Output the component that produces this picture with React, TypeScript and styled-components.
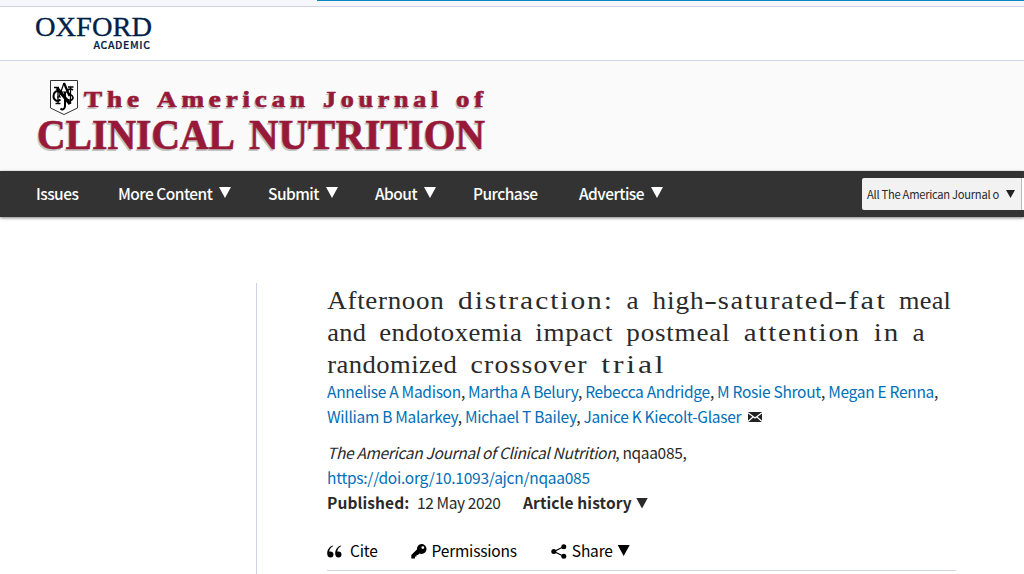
import styled, { createGlobalStyle } from 'styled-components';

const SANS = '"Noto Sans CJK SC", "Noto Sans", sans-serif';

const navItems = [
  { label: 'Issues', width: 42, gap: 40, arrow: false },
  { label: 'More Content', width: 94, gap: 37, arrow: true },
  { label: 'Submit', width: 51, gap: 37, arrow: true },
  { label: 'About', width: 42, gap: 37, arrow: true },
  { label: 'Purchase', width: 66, gap: 40, arrow: false },
  { label: 'Advertise', width: 65, gap: 37, arrow: true },
];

// [text, slack per glyph] - every glyph ends up on a 13px pitch
const titleLines: [string, number][][] = [
  [['Afternoon', 1.13], [' ', 0], ['distraction:', 3.25], [' ', 0], ['a', 1.46], [' ', 0], ['high', 1.44], ['-', 4.34], ['saturated', 2.57], ['-', 4.34], ['fat', 3.86], [' ', 0], ['meal', 0.36]],
  [['and', 0.49], [' ', 0], ['endotoxemia', 0.79], [' ', 0], ['impact', 1.2], [' ', 0], ['postmeal', 1.26], [' ', 0], ['attention', 2.89], [' ', 0], ['in', 2.89], [' ', 0], ['a', 1.46]],
  [['randomized', 0.73], [' ', 0], ['crossover', 1.93], [' ', 0], ['trial', 4.62]],
];

const authorLines = [
  ['Annelise A Madison', 'Martha A Belury', 'Rebecca Andridge', 'M Rosie Shrout', 'Megan E Renna'],
  ['William B Malarkey', 'Michael T Bailey', 'Janice K Kiecolt-Glaser'],
];

// part of the slack goes into wider glyphs, the rest into tracking
const stretch = (slack: number, dash: boolean) => 1 + ((dash ? 1 : 0.4) * slack) / (13 - slack);
const tracking = (slack: number, dash: boolean) => 13 / stretch(slack, dash) - (13 - slack);

const OxfordLogo = () => (
  <svg width='120' height='40' viewBox='34 11 120 40' fill='#002147'>
    <text x='35' y='36' fontFamily='Liberation Serif, serif' fontSize='26.5' textLength='117' lengthAdjust='spacingAndGlyphs' stroke='#002147' strokeWidth='.3'>OXFORD</text>
    <text x='93.5' y='48.500' fontFamily='Noto Sans CJK SC, sans-serif' fontWeight='500' fontSize='10.5' textLength='56.500' lengthAdjust='spacing' stroke='#002147' strokeWidth='.2'>ACADEMIC</text>
  </svg>
);

const JournalWords = () => (
  <>
    <g fontSize='22.5' letterSpacing='4'>
      <text x='84' y='106.500' textLength='60' lengthAdjust='spacingAndGlyphs'>The</text>
      <text x='157' y='106.500' textLength='153' lengthAdjust='spacingAndGlyphs'>American</text>
      <text x='323' y='106.500' textLength='120' lengthAdjust='spacingAndGlyphs'>Journal</text>
      <text x='456' y='106.500' textLength='32' lengthAdjust='spacingAndGlyphs'>of</text>
    </g>
    <g fontSize='42.5'>
      <text x='37' y='149' textLength='198' lengthAdjust='spacingAndGlyphs'>CLINICAL</text>
      <text x='249' y='149' textLength='236' lengthAdjust='spacingAndGlyphs'>NUTRITION</text>
    </g>
  </>
);

const JournalLogo = () => (
  <svg width='460' height='90' viewBox='34 71 460 90' fontFamily='Liberation Serif, serif' fontWeight='700'>
    <path d='M50.5 80.5h27v27.500L64 114.500l-13.500-6.500z' fill='#fff' stroke='#333' strokeWidth='1' />
    <g fill='none' stroke='#000'>
      <path d='M57 88l13 16' strokeWidth='3.200' />
      <path d='M54 87.500h5M58 88v15M55.500 103.500h5M70.500 87v17M68 87h5.500' strokeWidth='1.300' />
      <path d='M59 97l5-14M57 97h4M60 92h8' strokeWidth='1.200' />
      <path d='M64 83l5.500 13' strokeWidth='2.200' />
      <path d='M60 92c-3-2.500-6.500 0-6.500 4s3.500 6.500 7 3.500' strokeWidth='2' />
      <path d='M73 90c-3-2-6-.5-5.500 2s5.500 2.500 5.500 5.500-3.500 3.500-6 1.500' strokeWidth='1.600' />
      <path d='M65 92v14c0 3-2.500 4.500-4.500 2.500' strokeWidth='2' />
    </g>
    <g transform='translate(-1.500 2)' fill='#c4c4c4' aria-hidden='true'>
      <JournalWords />
    </g>
    <g fill='#981837' stroke='#981837' strokeWidth='.6'>
      <JournalWords />
    </g>
  </svg>
);

const MailIcon = () => (
  <svg width='14' height='10' viewBox='0 0 14 10'>
    <path d='M0 0h14v10H0z' fill='#222' />
    <path d='M0 .8l7 5.200 7-5.200M0 9.500l5-4.500M14 9.500L9 5' fill='none' stroke='#fff' strokeWidth='1.200' />
  </svg>
);

const QuoteIcon = () => (
  <svg width='15' height='13' viewBox='0 0 15 13'>
    <path d='M6 .5C2.500 1.500.200 4.500.200 8.500c0 2.500 1.300 4 3.300 4a3 3 0 0 0 3-3c0-1.800-1.200-3-3-3-.6 0-1 .1-1.300.3C2.500 4 4 2 6.300 1zM14 .5c-3.500 1-5.800 4-5.800 8 0 2.500 1.300 4 3.300 4a3 3 0 0 0 3-3c0-1.800-1.200-3-3-3-.6 0-1 .1-1.300.3.3-2.800 1.800-4.800 4.100-5.800z' />
  </svg>
);

const KeyIcon = () => (
  <svg width='16' height='15' viewBox='0 0 16 15'>
    <path fillRule='evenodd' d='M10.500 0a5 5 0 0 1 0 10c-.8 0-1.500-.1-2.100-.4L7 11H5.500v1.500H4V14.500H.3v-3.500l5.600-5.500A5 5 0 0 1 10.500 0zM11.800 2.200a1.400 1.400 0 1 0 0 2.800 1.400 1.400 0 0 0 0-2.800z' />
  </svg>
);

const ShareIcon = () => (
  <svg width='16' height='15' viewBox='0 0 16 15'>
    <path d='M13 2.500L3 7.500l10 5' fill='none' stroke='#000' strokeWidth='1.200' />
    <circle cx='12.800' cy='2.700' r='2.500' />
    <circle cx='2.800' cy='7.500' r='2.500' />
    <circle cx='12.800' cy='12.300' r='2.500' />
  </svg>
);

const App = () => {
  return (
    <>
      <GlobalStyle />
      <TopStrip><ActiveLine /></TopStrip>
      <BrandBar><OxfordLogo /></BrandBar>
      <JournalHeader><JournalLogo /></JournalHeader>
      <NavBar>
        {navItems.map((item) => (
          <NavItem key={item.label} $gap={item.gap}>
            <NavLabel $width={item.width}>{item.label}</NavLabel>
            {item.arrow && <Arrow $color='#fff' $left={7} $up={3} />}
          </NavItem>
        ))}
        <SearchSelect>
          <SelectText>All The American Journal o</SelectText>
          <Arrow $color='#222' $left={7} $size={9} />
        </SearchSelect>
        <SearchInput />
      </NavBar>
      <Content>
        <Sidebar />
        <Article>
          <Title>
            {titleLines.map((line, i) => (
              <TitleLine key={i}>
                {line.map(([text, slack], j) =>
                  text === ' ' ? ' ' : (
                    <Word key={j} $count={text.length} $slack={slack} $dash={text === '-'}>{text}</Word>
                  ),
                )}
              </TitleLine>
            ))}
          </Title>
          <Authors>
            {authorLines.map((line, i) => (
              <AuthorLine key={i}>
                {line.map((name, j) => (
                  <span key={name}>
                    <Link>{name}</Link>
                    {i === 0 || j < line.length - 1 ? ', ' : '  '}
                  </span>
                ))}
                {i === 1 && <MailIcon />}
              </AuthorLine>
            ))}
          </Authors>
          <Citation>
            <TextLine $track={-0.33}><em>The American Journal of Clinical Nutrition</em>, nqaa085,</TextLine>
            <TextLine $track={-0.26}><Link>https://doi.org/10.1093/ajcn/nqaa085</Link></TextLine>
            <HistoryLine>
              <Strong $width={82}>Published:</Strong>
              <PubDate>12 May 2020</PubDate>
              <Strong $width={109}>Article history</Strong>
              <Arrow $color='#2a2a2a' $left={4} $up={-1} />
            </HistoryLine>
          </Citation>
          <Toolbar>
            <Tool $gap={8} $after={33}><QuoteIcon />Cite</Tool>
            <Tool $gap={5} $after={34}><KeyIcon />Permissions</Tool>
            <Tool $gap={5} $after={0}><ShareIcon />Share<Arrow $color='#000' $left={0} $up={-2} /></Tool>
          </Toolbar>
        </Article>
      </Content>
    </>
  );
};

export default App;

const GlobalStyle = createGlobalStyle`
* {
  box-sizing: border-box;
}
body {
  margin: 0;
  height: 574px;
  overflow: hidden;
  background: #fff;
  color: #2a2a2a;
  font-family: ${SANS};
  font-size: 15.5px;
  letter-spacing: -0.25px;
}
svg {
  display: block;
  flex: none;
  overflow: visible;
  letter-spacing: 0;
}
`;

const TopStrip = styled.div`
height: 7px;
background: #f5f7fb;
border-bottom: 1px solid #ced3e5;
`;

const ActiveLine = styled.div`
height: 1px;
margin-left: 317px;
background: #0a86bf;
`;

const BrandBar = styled.div`
height: 54px;
padding: 4px 34px 0;
border-bottom: 1px solid #ced3e5;
`;

const JournalHeader = styled.header`
height: 110px;
padding: 10px 34px 0;
background: #fafafa;
`;

const NavBar = styled.nav`
display: flex;
align-items: center;
height: 46px;
padding-left: 36px;
background: #333;
box-shadow: 0 1px 3px rgba(0, 0, 0, 0.5);
`;

const NavItem = styled.div<{ $gap: number }>`
display: flex;
align-items: center;
flex: none;
margin-right: ${({ $gap }) => $gap}px;
color: #fff;
font-weight: 500;
letter-spacing: -0.52px;
`;

const NavLabel = styled.span<{ $width: number }>`
width: ${({ $width }) => $width}px;
padding-bottom: 2px;
white-space: nowrap;
`;

const Arrow = styled.span<{ $color: string; $left: number; $up?: number; $size?: number }>`
flex: none;
width: ${({ $size = 12 }) => $size}px;
height: ${({ $size = 12 }) => $size - 1}px;
margin-left: ${({ $left }) => $left}px;
margin-bottom: ${({ $up = 0 }) => $up}px;
background: ${({ $color }) => $color};
clip-path: polygon(0 0, 100% 0, 50% 100%);
`;

const SearchSelect = styled.div`
display: flex;
align-items: center;
flex: none;
width: 160px;
height: 32px;
margin-left: auto;
padding-left: 5px;
border-right: 1px solid #bbb;
border-radius: 2px 0 0 2px;
background: #f2f2f2;
color: #2a2a2a;
font-size: 11.2px;
letter-spacing: -0.28px;
`;

const SelectText = styled.span`
width: 132px;
padding-bottom: 1px;
white-space: nowrap;
`;

const SearchInput = styled.div`
flex: none;
width: 2px;
height: 32px;
background: #fff;
`;

const Content = styled.main`
display: flex;
height: 357px;
padding-top: 66px;
`;

const Sidebar = styled.aside`
flex: none;
width: 257px;
border-right: 1px solid #ced3e5;
`;

const Article = styled.article`
width: 629px;
margin-left: 70px;
`;

const Title = styled.h1`
margin: 2px 0 0;
font-family: "Liberation Serif", serif;
font-size: 26px;
font-weight: 400;
line-height: 32px;
letter-spacing: 0;
`;

const TitleLine = styled.div`
height: 32px;
word-spacing: 6.5px;
white-space: pre;
`;

const Word = styled.span<{ $count: number; $slack: number; $dash: boolean }>`
display: inline-block;
width: ${({ $count }) => $count * 13}px;
padding-left: ${({ $slack, $dash }) => tracking($slack, $dash) / 2}px;
letter-spacing: ${({ $slack, $dash }) => tracking($slack, $dash)}px;
transform: scaleX(${({ $slack, $dash }) => stretch($slack, $dash)});
transform-origin: left center;
`;

const Authors = styled.div`
margin-top: -2px;
line-height: 25px;
letter-spacing: -0.29px;
`;

const AuthorLine = styled.div`
display: flex;
align-items: center;
height: 25px;
white-space: pre;
`;

const Link = styled.a`
color: #006fb7;
`;

const Citation = styled.div`
margin-top: 11px;
line-height: 25px;
`;

const TextLine = styled.div<{ $track: number }>`
height: 25px;
letter-spacing: ${({ $track }) => $track}px;
white-space: nowrap;
`;

const HistoryLine = styled.div`
display: flex;
align-items: center;
height: 25px;
white-space: nowrap;
`;

const Strong = styled.strong<{ $width: number }>`
width: ${({ $width }) => $width}px;
font-weight: 700;
letter-spacing: 0.1px;
`;

const PubDate = styled.span`
width: 83px;
margin: 0 23px 0 8px;
letter-spacing: -0.4px;
`;

const Toolbar = styled.div`
display: flex;
align-items: center;
height: 56px;
padding-top: 16px;
border-bottom: 1px solid #ced3e5;
color: #000;
`;

const Tool = styled.div<{ $gap: number; $after: number }>`
display: flex;
align-items: center;
gap: ${({ $gap }) => $gap}px;
margin-right: ${({ $after }) => $after}px;
padding-bottom: 2px;
letter-spacing: -0.2px;
svg {
  margin-top: 4px;
}
`;
